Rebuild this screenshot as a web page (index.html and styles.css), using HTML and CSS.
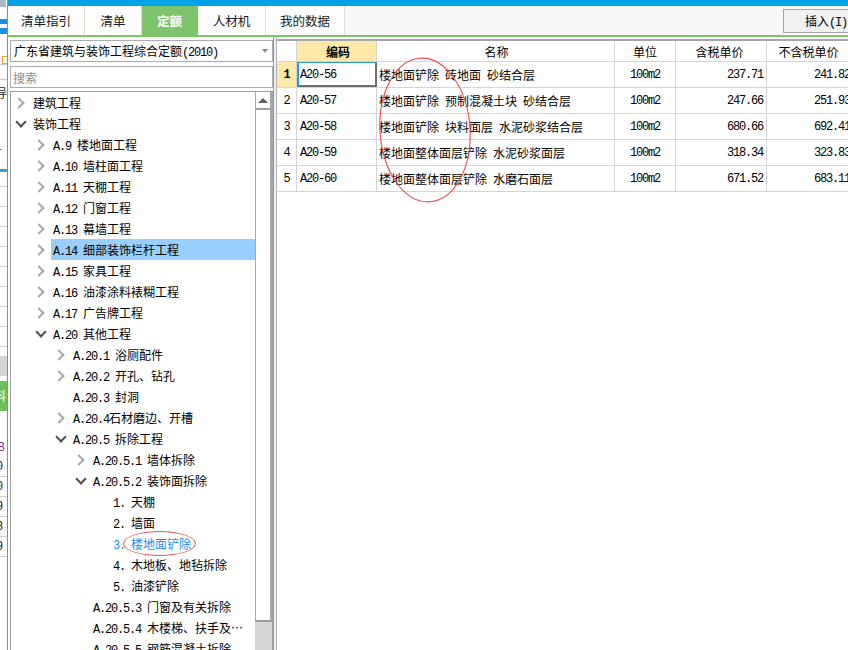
FILE: index.html
```html
<!DOCTYPE html>
<html lang="zh-CN">
<head>
<meta charset="utf-8">
<title>定额</title>
<link rel="stylesheet" href="styles.css">
</head>
<body>
<div class="screen">
  <div class="strip">
    <i class="s s-ico"></i>
    <i class="s s-blue"></i>
    <i class="s s-orange"></i>
    <i class="s s-grid"></i>
    <b class="s s-ch s-first">导</b>
    <b class="s s-ch s-one">1</b>
    <i class="s s-bline"></i>
    <i class="s s-row s-row0"></i>
    <i class="s s-row"></i>
    <i class="s s-row"></i>
    <i class="s s-row"></i>
    <i class="s s-row"></i>
    <i class="s s-row"></i>
    <i class="s s-row"></i>
    <i class="s s-row"></i>
    <i class="s s-row"></i>
    <i class="s s-band"></i>
    <b class="s s-green">料</b>
    <b class="s s-ch s-purple">B</b>
    <b class="s s-ch s-num s-num0">0</b>
    <b class="s s-ch s-num">0</b>
    <b class="s s-ch s-num">9</b>
    <b class="s s-ch s-num">8</b>
    <b class="s s-ch s-num">9</b>
  </div>

  <div class="app">
    <div class="titlebar"></div>
    <div class="tabbar">
      <nav class="tabs">
        <div class="tab">清单指引</div>
        <div class="tab">清单</div>
        <div class="tab active">定额</div>
        <div class="tab">人材机</div>
        <div class="tab">我的数据</div>
      </nav>
      <button class="insert">插入<span class="mono">(I)</span></button>
    </div>

    <div class="main">
      <aside class="left">
        <div class="select"><span>广东省建筑与装饰工程综合定额<span class="mono">(2010)</span></span><i class="caret"></i></div>
        <div class="search">搜索</div>
        <div class="tree">
          <div class="tree-list">
            <div class="row l0"><span class="arrow closed"></span><span class="label">建筑工程</span></div>
            <div class="row l0"><span class="arrow open"></span><span class="label">装饰工程</span></div>
            <div class="row l1"><span class="arrow closed"></span><span class="label"><span class="mono">A.9 </span>楼地面工程</span></div>
            <div class="row l1"><span class="arrow closed"></span><span class="label"><span class="mono">A.10 </span>墙柱面工程</span></div>
            <div class="row l1"><span class="arrow closed"></span><span class="label"><span class="mono">A.11 </span>天棚工程</span></div>
            <div class="row l1"><span class="arrow closed"></span><span class="label"><span class="mono">A.12 </span>门窗工程</span></div>
            <div class="row l1"><span class="arrow closed"></span><span class="label"><span class="mono">A.13 </span>幕墙工程</span></div>
            <div class="row l1"><span class="arrow closed"></span><span class="label sel"><span class="mono">A.14 </span>细部装饰栏杆工程</span></div>
            <div class="row l1"><span class="arrow closed"></span><span class="label"><span class="mono">A.15 </span>家具工程</span></div>
            <div class="row l1"><span class="arrow closed"></span><span class="label"><span class="mono">A.16 </span>油漆涂料裱糊工程</span></div>
            <div class="row l1"><span class="arrow closed"></span><span class="label"><span class="mono">A.17 </span>广告牌工程</span></div>
            <div class="row l1"><span class="arrow open"></span><span class="label"><span class="mono">A.20 </span>其他工程</span></div>
            <div class="row l2"><span class="arrow closed"></span><span class="label"><span class="mono">A.20.1 </span>浴厕配件</span></div>
            <div class="row l2"><span class="arrow closed"></span><span class="label"><span class="mono">A.20.2 </span>开孔、钻孔</span></div>
            <div class="row l2"><span class="arrow"></span><span class="label"><span class="mono">A.20.3 </span>封洞</span></div>
            <div class="row l2"><span class="arrow closed"></span><span class="label"><span class="mono">A.20.4</span>石材磨边、开槽</span></div>
            <div class="row l2"><span class="arrow open"></span><span class="label"><span class="mono">A.20.5 </span>拆除工程</span></div>
            <div class="row l3"><span class="arrow closed"></span><span class="label"><span class="mono">A.20.5.1 </span>墙体拆除</span></div>
            <div class="row l3"><span class="arrow open"></span><span class="label"><span class="mono">A.20.5.2 </span>装饰面拆除</span></div>
            <div class="row l4"><span class="arrow"></span><span class="label"><span class="mono">1. </span>天棚</span></div>
            <div class="row l4"><span class="arrow"></span><span class="label"><span class="mono">2. </span>墙面</span></div>
            <div class="row l4"><span class="arrow"></span><span class="label current"><span class="mono">3. </span><span class="circled">楼地面铲除</span></span></div>
            <div class="row l4"><span class="arrow"></span><span class="label"><span class="mono">4. </span>木地板、地毡拆除</span></div>
            <div class="row l4"><span class="arrow"></span><span class="label"><span class="mono">5. </span>油漆铲除</span></div>
            <div class="row l3"><span class="arrow"></span><span class="label"><span class="mono">A.20.5.3 </span>门窗及有关拆除</span></div>
            <div class="row l3"><span class="arrow"></span><span class="label"><span class="mono">A.20.5.4 </span>木楼梯、扶手及…</span></div>
            <div class="row l3"><span class="arrow"></span><span class="label"><span class="mono">A.20.5.5 </span>钢筋混凝土拆除</span></div>
          </div>
          <div class="vscroll">
            <div class="up"><i></i></div>
            <div class="thumb"></div>
          </div>
        </div>
      </aside>

      <div class="splitter"></div>

      <section class="grid">
        <div class="gtable">
          <div class="ghead">
            <div class="c cn"></div>
            <div class="c cc hl">编码</div>
            <div class="c cm">名称</div>
            <div class="c cu">单位</div>
            <div class="c cp">含税单价</div>
            <div class="c cq">不含税单价</div>
          </div>
          <div class="grow">
            <div class="c cn hl"><b class="mono">1</b></div>
            <div class="c cc focus"><span class="mono">A20-56</span></div>
            <div class="c cm">楼地面铲除 砖地面 砂结合层</div>
            <div class="c cu"><span class="mono">100m2</span></div>
            <div class="c cp"><span class="mono">237.71</span></div>
            <div class="c cq"><span class="mono">241.82</span></div>
          </div>
          <div class="grow">
            <div class="c cn"><span class="mono">2</span></div>
            <div class="c cc"><span class="mono">A20-57</span></div>
            <div class="c cm">楼地面铲除 预制混凝土块 砂结合层</div>
            <div class="c cu"><span class="mono">100m2</span></div>
            <div class="c cp"><span class="mono">247.66</span></div>
            <div class="c cq"><span class="mono">251.93</span></div>
          </div>
          <div class="grow">
            <div class="c cn"><span class="mono">3</span></div>
            <div class="c cc"><span class="mono">A20-58</span></div>
            <div class="c cm">楼地面铲除 块料面层 水泥砂浆结合层</div>
            <div class="c cu"><span class="mono">100m2</span></div>
            <div class="c cp"><span class="mono">680.66</span></div>
            <div class="c cq"><span class="mono">692.41</span></div>
          </div>
          <div class="grow">
            <div class="c cn"><span class="mono">4</span></div>
            <div class="c cc"><span class="mono">A20-59</span></div>
            <div class="c cm">楼地面整体面层铲除 水泥砂浆面层</div>
            <div class="c cu"><span class="mono">100m2</span></div>
            <div class="c cp"><span class="mono">318.34</span></div>
            <div class="c cq"><span class="mono">323.83</span></div>
          </div>
          <div class="grow">
            <div class="c cn"><span class="mono">5</span></div>
            <div class="c cc"><span class="mono">A20-60</span></div>
            <div class="c cm">楼地面整体面层铲除 水磨石面层</div>
            <div class="c cu"><span class="mono">100m2</span></div>
            <div class="c cp"><span class="mono">671.52</span></div>
            <div class="c cq"><span class="mono">683.11</span></div>
          </div>
        </div>
        <svg class="mark" width="100" height="150" viewBox="0 0 100 150">
          <ellipse cx="49" cy="74" rx="45" ry="72" transform="rotate(-4 49 74)" fill="none" stroke="#ee4b4b" stroke-width="1.1"/>
        </svg>
      </section>
    </div>
  </div>
</div>
</body>
</html>
```

FILE: styles.css
```css
* { box-sizing: border-box; margin: 0; padding: 0; }
html, body { width: 848px; height: 650px; overflow: hidden; background: #fff; }
body {
  font-family: "Noto Sans CJK SC", "Liberation Sans", sans-serif;
  font-size: 12px;
  color: #000;
}
.mono {
  font-family: "Liberation Mono", "DejaVu Sans Mono", monospace;
  font-size: 12px;
  letter-spacing: -1.2px;
  white-space: pre;
}
.screen { display: flex; width: 848px; height: 650px; overflow: hidden; }

/* ---------- left strip (window behind) ---------- */
.strip { width: 7px; flex: none; display: flex; flex-direction: column; overflow: hidden; background: #fff; }
.s { display: block; flex: none; font-style: normal; }
.s-ico { height: 7px; width: 6px; background: #a9b9c9; }
.s-blue { margin-top: 12px; height: 15px; background: linear-gradient(#1e90e0 0 5px, #fff 5px 9px, #1e90e0 9px); }
.s-orange { margin-top: 22px; height: 8px; border: 1px solid #f2a33a; border-right: 0; margin-left: 2px; }
.s-grid { height: 16px; border-top: 1px solid #c8c8c8; border-bottom: 1px solid #c8c8c8; }
.s-ch { height: 20px; line-height: 20px; font-weight: normal; font-size: 12px; margin-left: -5px; color: #222; white-space: nowrap; }
.s-first { margin-top: 5px; height: 16px; line-height: 16px; }
.s-one { margin-top: 36px; height: 16px; line-height: 16px; }
.s-bline { margin-top: 16px; height: 3px; background: #3d95e0; }
.s-row { height: 20px; border-bottom: 1px solid #cfcfcf; }
.s-row0 { height: 15px; }
.s-band { margin-top: 9px; height: 20px; background: #d4d4d4; }
.s-green { margin-top: 5px; height: 30px; line-height: 30px; background: #6cbf5a; color: #fff; font-weight: normal; margin-left: 0; text-indent: -6px; white-space: nowrap; overflow: hidden; }
.s-purple { margin-top: 26px; height: 18px; line-height: 18px; color: #8a2a8a; margin-left: -3px; }
.s-num { border-bottom: 1px solid #cfcfcf; margin-left: -4px; font-family: "Liberation Mono", monospace; }
.s-num0 { margin-top: 2px; }

/* ---------- app ---------- */
.app { flex: 1; min-width: 0; display: flex; flex-direction: column; border-left: 1px solid #8c8c8c; }
.titlebar { height: 6px; flex: none; background: #00a3e9; }
.tabbar {
  height: 31px; flex: none;
  display: flex; justify-content: space-between; align-items: flex-start;
  background: #f8f8f8;
  border-bottom: 2px solid #7ec46c;
}
.tabs { display: flex; height: 29px; }
.tab {
  display: flex; align-items: center; justify-content: center;
  height: 29px;
  background: #fdfdfd;
  border-right: 1px solid #d3e5cc;
  color: #1a1a1a;
  font-size: 12.5px;
}
.tab:nth-child(1) { width: 77px; }
.tab:nth-child(2) { width: 57px; }
.tab:nth-child(3) { width: 56px; }
.tab:nth-child(4) { width: 68px; }
.tab:nth-child(5) { width: 79px; }
.tab.active { background: #7ec46c; color: #fff; font-weight: bold; border-right-color: #7ec46c; }
.insert {
  margin-top: 3px; margin-right: -8px;
  width: 73px; height: 24px;
  border: 1px solid #a6a6a6; background: #f1f1f1;
  font-family: inherit; font-size: 12px; color: #000;
  text-align: left; padding-left: 21px;
}

.main { flex: 1; min-height: 0; display: flex; }

/* ---------- left panel ---------- */
.left { width: 265px; flex: none; padding: 3px 0 0 2px; display: flex; flex-direction: column; }
.select {
  height: 22px; flex: none;
  border: 1px solid #acacac;
  display: flex; align-items: center; justify-content: space-between;
  padding-left: 3px; padding-right: 4px;
  background: #fff;
}
.caret { width: 0; height: 0; border-left: 3px solid transparent; border-right: 3px solid transparent; border-top: 4px solid #8a8a8a; }
.search {
  margin-top: 4px; height: 22px; flex: none;
  border: 1px solid #acacac;
  display: flex; align-items: center;
  padding-left: 2px;
  color: #8c8c8c;
}
.tree {
  margin-top: 3px; flex: 1; min-height: 0;
  border: 1px solid #a0a0a0; border-bottom: 0;
  display: flex; overflow: hidden;
}
.tree-list { flex: 1; min-width: 0; }
.row { height: 21px; display: flex; align-items: center; white-space: nowrap; }
.l0 { padding-left: 3px; }
.l1 { padding-left: 23px; }
.l2 { padding-left: 43px; }
.l3 { padding-left: 63px; }
.l4 { padding-left: 83px; }
.arrow { width: 14px; height: 21px; flex: none; display: flex; align-items: center; justify-content: center; }
.arrow.closed::before {
  content: ""; width: 6px; height: 6px;
  border-top: 2px solid #a9a9a9; border-right: 2px solid #a9a9a9;
  transform: translateX(-2px) rotate(45deg);
}
.arrow.open::before {
  content: ""; width: 6px; height: 6px;
  border-right: 2px solid #505050; border-bottom: 2px solid #505050;
  transform: translateY(-2px) rotate(45deg);
}
.label { flex: 1; margin-left: 3px; padding-left: 2px; height: 21px; line-height: 21px; }
.label.sel { background: #99cfff; }
.label.current { color: #1a8cf0; }
.circled { position: relative; }
.circled::after {
  content: ""; position: absolute;
  left: -8px; right: -5px; top: -4px; bottom: -4px;
  border: 1px solid #ee5a5a; border-radius: 50%;
}
.vscroll { width: 17px; flex: none; display: flex; flex-direction: column; background: #d4d4d4; }
.up {
  height: 18px; flex: none;
  background: #fff;
  border-left: 1px solid #a8a8a8; border-right: 2px solid #a8a8a8; border-bottom: 2px solid #a0a0a0;
  display: flex; align-items: center; justify-content: center;
}
.up i { width: 0; height: 0; border-left: 5px solid transparent; border-right: 5px solid transparent; border-bottom: 5px solid #5f5f5f; }
.thumb {
  height: 512px; flex: none;
  background: #fff;
  border-left: 1px solid #a8a8a8; border-right: 2px solid #a8a8a8; border-bottom: 2px solid #9c9c9c;
}

.splitter { width: 4px; flex: none; background: #e9eef4; border-left: 1px solid #9a9a9a; border-right: 1px solid #b4b4b4; }

/* ---------- grid ---------- */
.grid { flex: 1; min-width: 0; position: relative; overflow: hidden; padding-top: 2px; }
.gtable { width: 577px; border-top: 2px solid #a6a6a6; }
.ghead, .grow { display: flex; border-bottom: 1px solid #d4d4d4; }
.ghead { height: 21px; }
.grow { height: 26px; }
.c {
  flex: none; height: 100%;
  display: flex; align-items: center;
  border-right: 1px solid #d4d4d4;
  white-space: nowrap; overflow: hidden;
}
.ghead .c { justify-content: center; }
.cn { width: 20px; justify-content: center; }
.cc { width: 80px; padding-left: 3px; }
.cm { width: 238px; padding-left: 2px; word-spacing: 3.3px; }
.cu { width: 61px; justify-content: center; }
.cp { width: 91px; justify-content: flex-end; padding-right: 3px; }
.cq { width: 87px; justify-content: flex-end; padding-right: 3px; }
.hl { background: #ffe9a8; font-weight: bold; }
.focus {
  box-shadow: inset 2px 0 0 #2a98d8, inset 0 1px 0 #2a98d8, inset -1px 0 0 #6e6e6e, inset 0 -2px 0 #6e6e6e;
  border-right-color: #6e6e6e;
}
.mark { position: absolute; left: 99px; top: 19px; overflow: visible; pointer-events: none; }
```
